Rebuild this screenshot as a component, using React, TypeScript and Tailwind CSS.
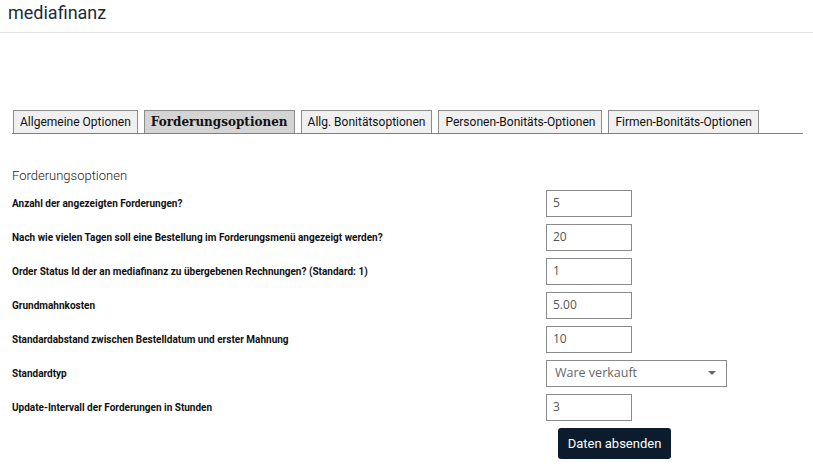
const tabs = [
  "Allgemeine Optionen",
  "Forderungsoptionen",
  "Allg. Bonitätsoptionen",
  "Personen-Bonitäts-Optionen",
  "Firmen-Bonitäts-Optionen",
]

const fields = [
  { label: "Anzahl der angezeigten Forderungen?", value: "5" },
  { label: "Nach wie vielen Tagen soll eine Bestellung im Forderungsmenü angezeigt werden?", value: "20" },
  { label: "Order Status Id der an mediafinanz zu übergebenen Rechnungen? (Standard: 1)", value: "1" },
  { label: "Grundmahnkosten", value: "5.00" },
  { label: "Standardabstand zwischen Bestelldatum und erster Mahnung", value: "10" },
  { label: "Standardtyp", value: "Ware verkauft", select: true },
  { label: "Update-Intervall der Forderungen in Stunden", value: "3" },
]

export default function App() {
  return (
    <div className="min-h-[466px] bg-white font-['Roboto',sans-serif]">
      {/* Header */}
      <div className="h-[33px] border-b border-[#e3e3e3] pl-[8px] pt-[2px]">
        <span className="text-[18px] leading-[22px] text-[#1c2b3a]">mediafinanz</span>
      </div>

      {/* Tabs */}
      <div className="mt-[77px] ml-[12px] mr-[10px] flex items-end gap-[6px] border-b border-[#808080] pl-[1px]">
        {tabs.map((t) =>
          t === "Forderungsoptionen" ? (
            <div
              key={t}
              className="flex h-[23px] items-center border border-b-0 border-[#8c8c8c] bg-[#d4d4d4] px-[6px] font-['DejaVu_Serif',serif] text-[12px] font-bold text-[#111]"
            >
              {t}
            </div>
          ) : (
            <div
              key={t}
              className="flex h-[23px] items-center border border-b-0 border-[#8c8c8c] bg-[#f0f0f0] px-[6px] text-[12px] text-[#111]"
            >
              {t}
            </div>
          )
        )}
      </div>

      {/* Form */}
      <div className="px-[12px] pt-[34px]">
        <div className="text-[13px] font-light leading-[16px] text-[#222]">Forderungsoptionen</div>
        <div className="mt-[2px] flex flex-col">
          {fields.map((f) => (
            <div key={f.label} className="flex h-[34px] items-center">
              <div className="w-[534px] text-[10px] font-bold text-[#111]">{f.label}</div>
              {f.select ? (
                <div className="flex h-[27px] w-[181px] items-center justify-between border border-[#8a8a8a] pl-[8px] pr-[8px] font-['Open_Sans',sans-serif] text-[12.5px] text-[#666]">
                  <span>{f.value}</span>
                  <svg width="10" height="6" viewBox="0 0 10 6" className="mr-[1px]">
                    <path d="M1 1h8L5 5z" fill="#666" />
                  </svg>
                </div>
              ) : (
                <div className="flex h-[27px] w-[86px] items-center border border-[#8a8a8a] pl-[6px] font-['Open_Sans',sans-serif] text-[12px] text-[#555]">
                  {f.value}
                </div>
              )}
            </div>
          ))}
        </div>
        <div className="mt-[4px] pl-[546px]">
          <button className="flex h-[31px] w-[113px] items-center justify-center rounded-[3px] bg-[#0b1d2c] text-[13px] text-white">
            Daten absenden
          </button>
        </div>
      </div>
    </div>
  )
}
